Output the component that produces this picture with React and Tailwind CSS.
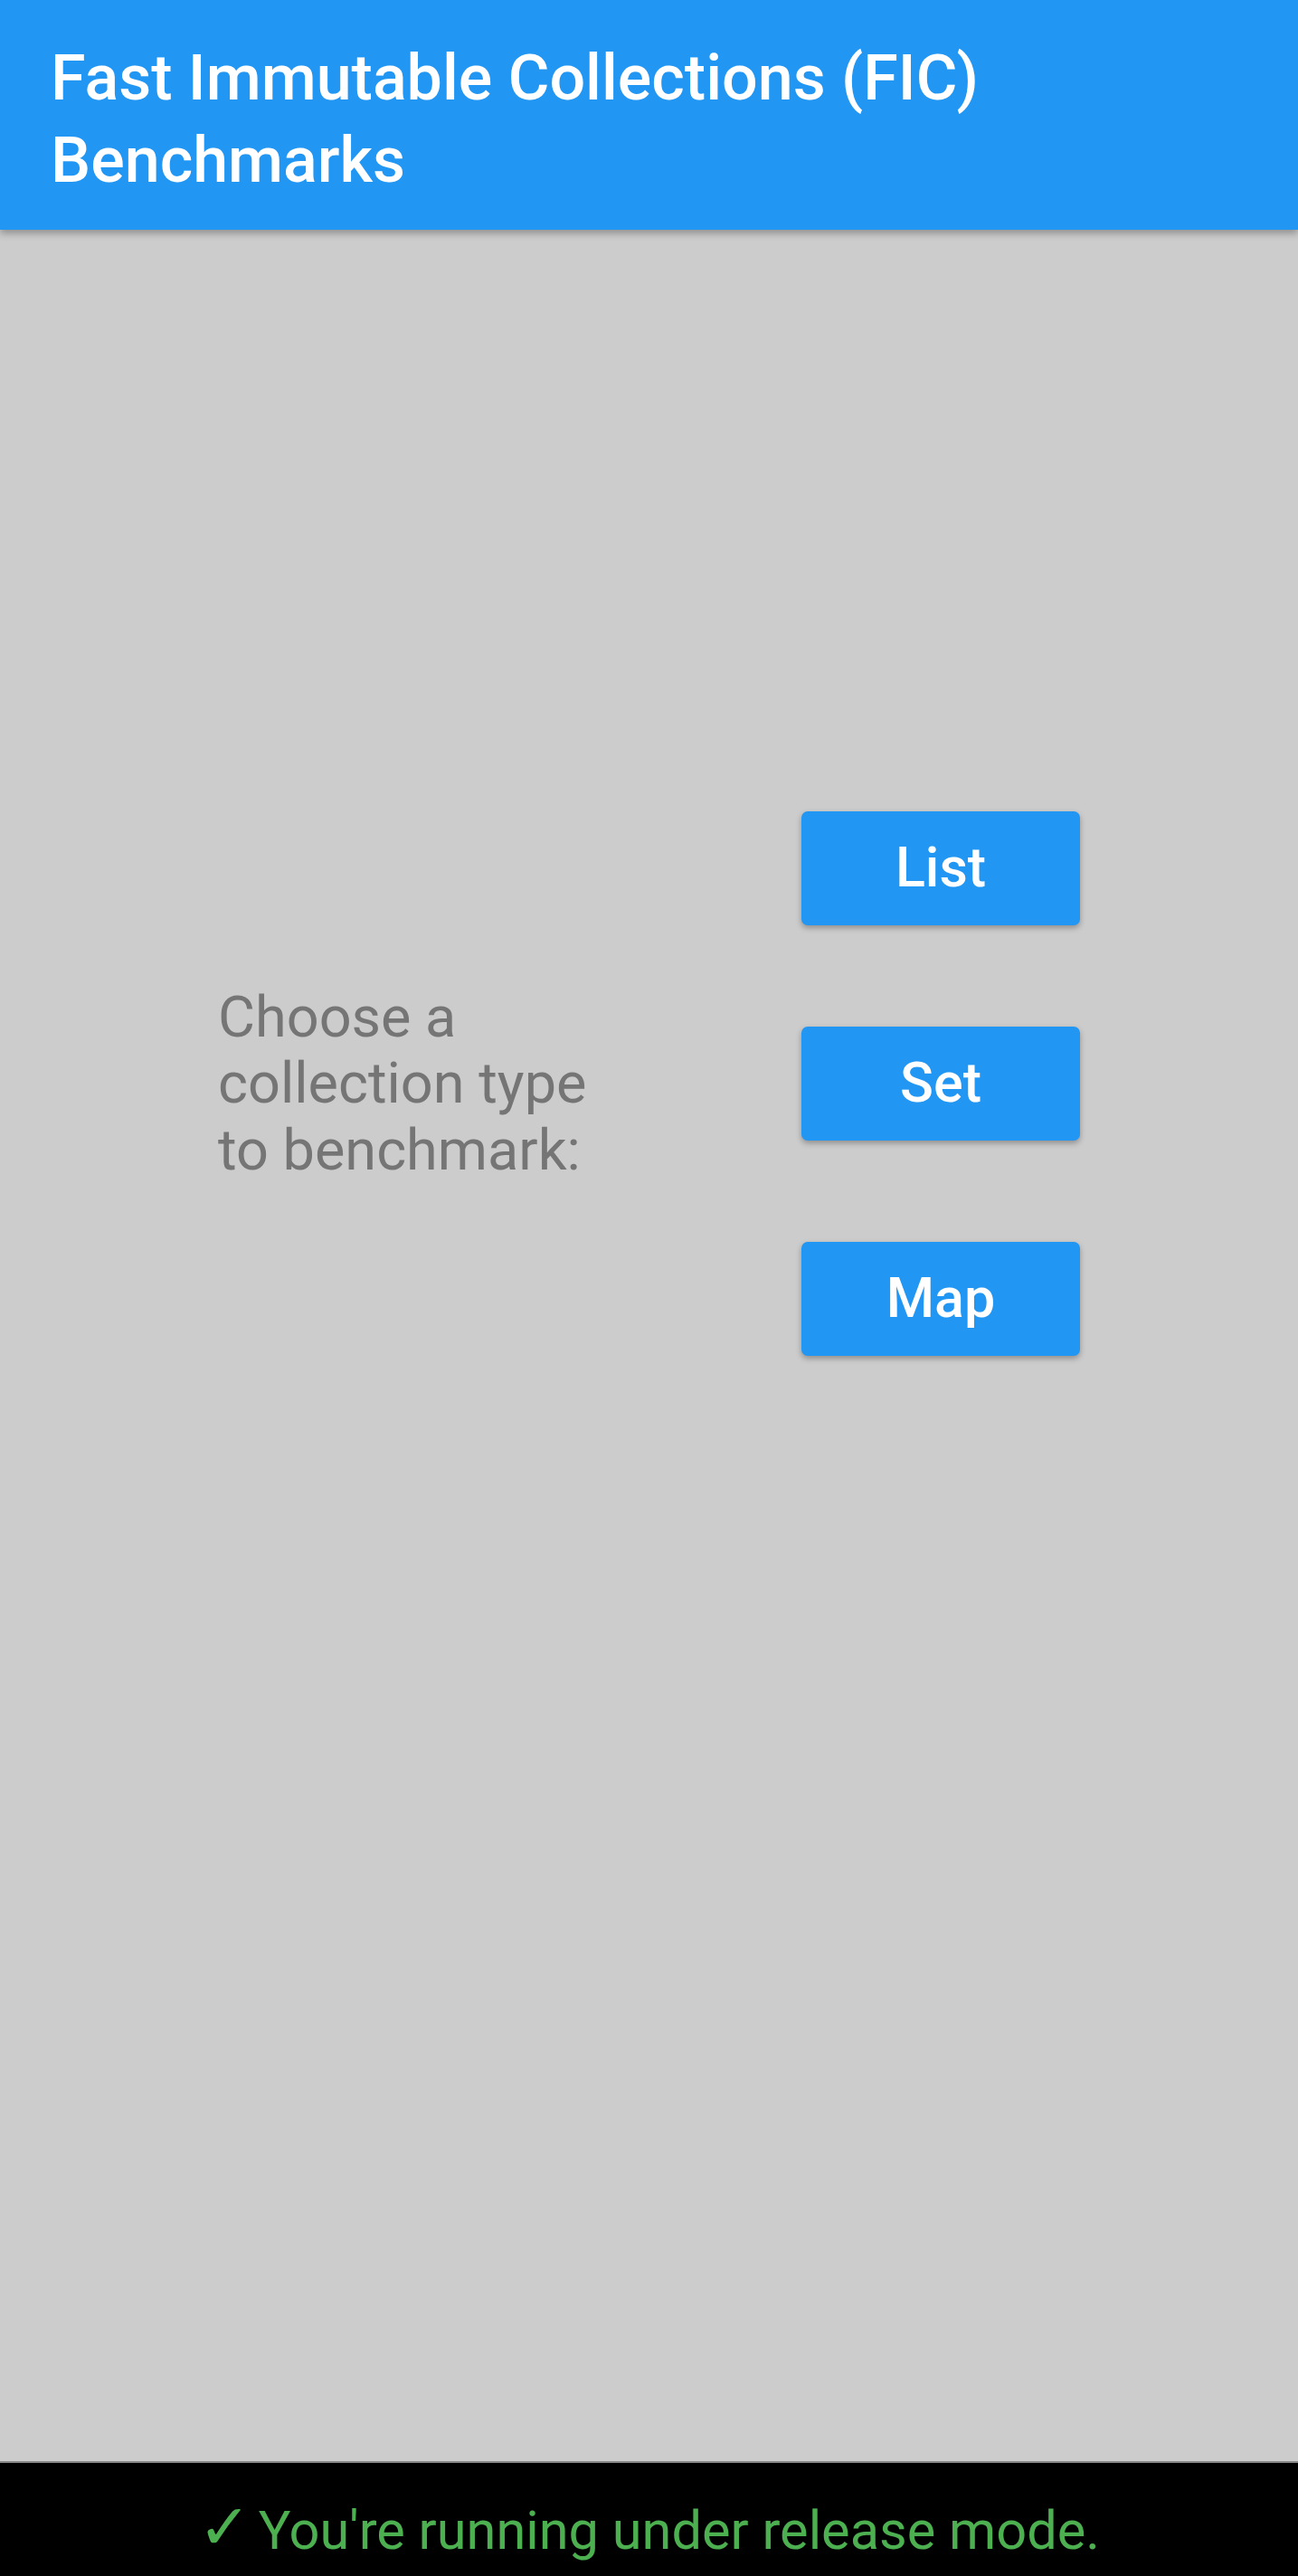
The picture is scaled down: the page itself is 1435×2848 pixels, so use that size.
export default function App() {
  const font = { fontFamily: "Roboto, 'Noto Sans', sans-serif" };
  return (
    <div className="flex h-[2848px] w-full flex-col bg-[#cccccc]" style={font}>
      <header className="relative z-10 h-[254px] shrink-0 bg-[#2196f3] pl-[56px] pt-[41px] shadow-[0_4px_8px_rgba(0,0,0,0.3)]">
        <h1 className="text-[70px] font-medium leading-[91px] text-white">
          Fast Immutable Collections (FIC)
          <br />
          Benchmarks
        </h1>
      </header>
      <main className="flex-1 pt-[643px]">
        <div className="flex items-center justify-evenly">
          <div className="w-[404px] whitespace-nowrap text-[63px] leading-[73.5px] text-[#757575]">
            <div>Choose a</div>
            <div>collection type</div>
            <div>to benchmark:</div>
          </div>
          <div className="flex flex-col gap-[112px]">
            {["List", "Set", "Map"].map((l) => (
              <button
                key={l}
                className="flex h-[126px] w-[308px] items-center justify-center rounded-[7px] bg-[#2196f3] text-[61px] font-medium text-white shadow-[0_3px_6px_rgba(0,0,0,0.3)]"
              >
                {l}
              </button>
            ))}
          </div>
        </div>
      </main>
      <footer className="flex h-[127px] shrink-0 items-center justify-center border-t-[2px] border-[#888888] bg-black pt-[16px]">
        <span className="flex items-baseline text-[59.5px] leading-none text-[#4caf50]">
          <span className="mr-[8px] text-[70px] font-bold leading-none" style={{ fontFamily: "'DejaVu Sans', sans-serif" }}>✓</span>
          <span>You're running under release mode.</span>
        </span>
      </footer>
    </div>
  );
}
